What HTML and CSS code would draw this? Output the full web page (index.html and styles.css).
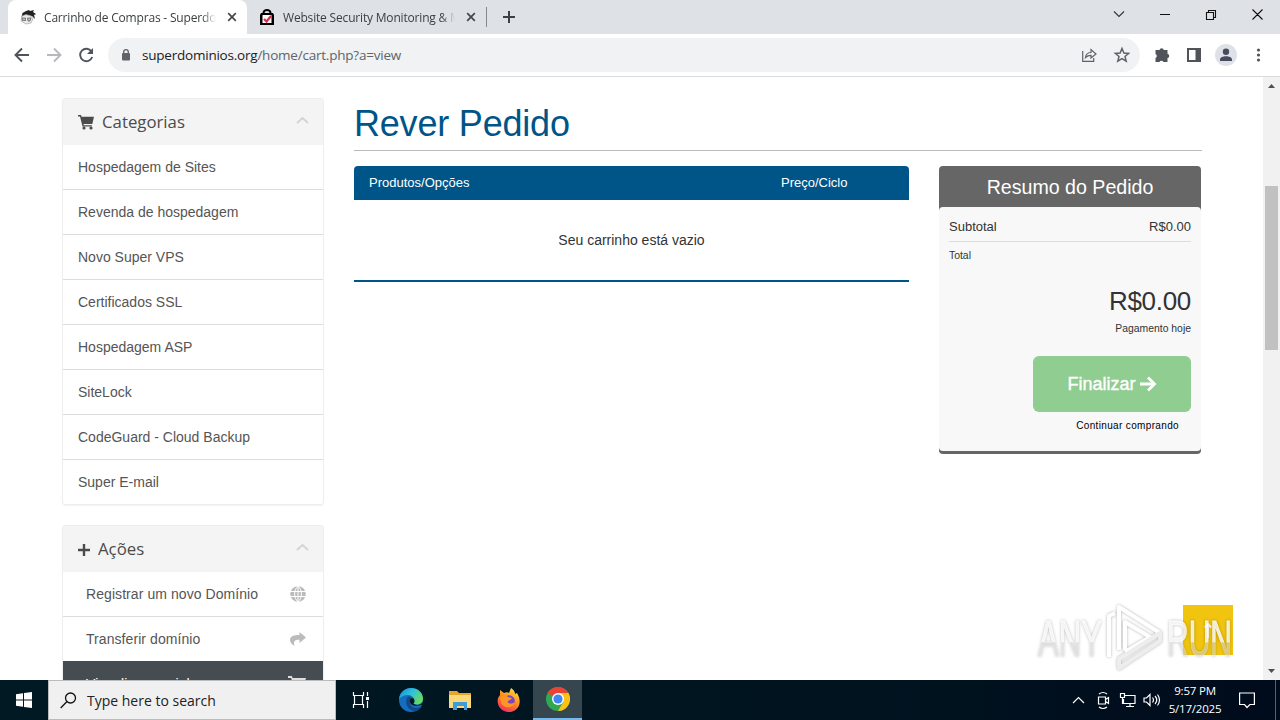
FILE: index.html
```html
<!DOCTYPE html>
<html lang="pt-BR">
<head>
    <meta charset="UTF-8">
    <meta name="viewport" content="width=device-width, initial-scale=1.0">
    <title>Carrinho de Compras - Superdominios</title>
    <link rel="stylesheet" href="styles.css">
</head>
<body>
    <div class="tabs">
        <div class="tab active">
            <svg class="favicon" width="16" height="16" viewBox="0 0 16 16"><path d="M1.500 8l1-4L6 2l3-1 1 1 4-1-1 2 3 2-2 1 1 4-3-3-6-1z" fill="#222"/><path d="M2 7l4-1.500 5 1.500 2 3-2 4-5 1-5-3z" fill="#eee9e6" stroke="#999" stroke-width=".6"/><path d="M2 9h3.500v2.500H2.500zM7.500 9H11l-1 3H8z" fill="#b5c4d2" stroke="#555" stroke-width=".7"/></svg>
            <span class="tab-title">Carrinho de Compras - Superdominios</span>
            <svg class="close" width="10" height="10" viewBox="0 0 10 10"><path d="M1.200 1.200l7.600 7.600M8.800 1.200L1.200 8.800"/></svg>
        </div>
        <div class="tab">
            <svg class="favicon" width="16" height="16" viewBox="0 0 16 16"><path d="M4.500 5V4a3.500 3 0 017 0v1" fill="none" stroke="#000" stroke-width="2"/><path d="M2 4h12l1 2v10H1V6z"/><path d="M3.500 6h9v8h-9z" fill="#fff"/><path d="M5 10l2.500 2.500L12 7" fill="none" stroke="#d9304c" stroke-width="2.200"/></svg>
            <span class="tab-title">Website Security Monitoring &amp; Malware</span>
            <svg class="close" width="10" height="10" viewBox="0 0 10 10"><path d="M1.200 1.200l7.600 7.600M8.800 1.200L1.200 8.800"/></svg>
        </div>
        <div class="tab-line"></div>
        <svg class="new-tab" width="14" height="14" viewBox="0 0 14 14"><path d="M7 1v12M1 7h12" stroke="#3c4043" stroke-width="2"/></svg>
        <svg class="window-buttons" width="160" height="28" viewBox="0 0 160 28" fill="none" stroke="#111" stroke-width="1.100"><path d="M5 8.500l5 5 5-5" stroke="#333"/><path d="M51 11.500h10M97.500 9.500h7v7h-7zM99.500 9.500v-2h7v7h-2M143.500 6.500l10 10M153.500 6.500l-10 10"/></svg>
    </div>
    <div class="toolbar">
        <svg class="nav-icons" width="96" height="24" viewBox="0 0 96 24" fill="none" stroke="#50545a" stroke-width="1.900"><path d="M29 12H16M22 5.500L15.500 12l6.500 6.500"/><path d="M47 12h13M54 5.500l6.500 6.500-6.500 6.500" stroke="#b6b8bb"/><path d="M91.500 8.500A6.200 6.200 0 1092.200 14"/><path d="M93 5v6h-6z" fill="#50545a" stroke="none"/></svg>
        <div class="address">
            <svg width="8" height="12" viewBox="0 0 8 12"><path d="M1.700 6V3a2.300 2.300 0 014.600 0v3" fill="none" stroke="#5f6368" stroke-width="1.300"/><rect y="4" width="8" height="7.500" rx="1" fill="#5f6368"/></svg>
            <span class="url">superdominios.org<span>/home/cart.php?a=view</span></span>
            <svg class="address-icons" width="50" height="18" viewBox="0 0 50 18" fill="none" stroke="#5f6368" stroke-width="1.200"><path d="M2.700 5v10.300h11V12"/><path d="M5.500 11.500c.5-3.500 2.500-5 5.500-5V3.500L16 8l-5 4V9.300c-2.500 0-4 .7-5.500 2.200z"/><path d="M42 2.500l1.900 4.500 4.800.4-3.700 3.100 1.200 4.700-4.200-2.500-4.200 2.500 1.200-4.700-3.700-3.100 4.800-.4z" stroke-width="1.500"/></svg>
        </div>
        <svg class="browser-icons" width="124" height="24" viewBox="0 0 124 24" fill="#50545a"><path d="M6 7h3.500a2.200 2.200 0 014.300 0h3.700v3.800a2.200 2.200 0 010 4.300V19h-4a2.200 2.200 0 00-4 0h-4v-4a2.200 2.200 0 000-4V7z"/><path d="M37 5h14v14H37zM39 7v10h6.500V7z" fill-rule="evenodd"/><circle cx="76" cy="12" r="11" fill="#dfe1e9"/><circle cx="76" cy="8.800" r="3.200" fill="#464b60"/><path d="M70 18v-1.500c0-4.500 12-4.500 12 0V18z" fill="#464b60"/><circle cx="108.500" cy="7" r="1.600"/><circle cx="108.500" cy="12" r="1.600"/><circle cx="108.500" cy="17" r="1.600"/></svg>
    </div>

    <div class="viewport">
        <div class="page">
            <div class="sidebar">
                <div class="panel">
                    <div class="panel-heading">
                        <svg width="16" height="15" viewBox="0 0 16 15"><path d="M0 0h3l.5 1.800H16L14.300 9H5.500l.3 1.200h8v1.300H4.500L2 1.500H0z" fill="#4b4b4b"/><circle cx="6" cy="13" r="1.600" fill="#4b4b4b"/><circle cx="13" cy="13" r="1.600" fill="#4b4b4b"/></svg>
                        <span>Categorias</span>
                        <svg class="chevron" width="13" height="8" viewBox="0 0 13 8"><path d="M1 7l5.500-5L12 7"/></svg>
                    </div>
                    <div class="item">Hospedagem de Sites</div>
                    <div class="item">Revenda de hospedagem</div>
                    <div class="item">Novo Super VPS</div>
                    <div class="item">Certificados SSL</div>
                    <div class="item">Hospedagem ASP</div>
                    <div class="item">SiteLock</div>
                    <div class="item">CodeGuard - Cloud Backup</div>
                    <div class="item">Super E-mail</div>
                </div>
                <div class="panel">
                    <div class="panel-heading">
                        <svg width="12" height="14" viewBox="0 0 12 14"><path d="M6 2v12M0 8h12" stroke="#4b4b4b" stroke-width="2.400"/></svg>
                        <span>Ações</span>
                        <svg class="chevron" width="13" height="8" viewBox="0 0 13 8"><path d="M1 7l5.500-5L12 7"/></svg>
                    </div>
                    <div class="item action">Registrar um novo Domínio
                        <svg width="16" height="16" viewBox="0 0 16 16"><circle cx="8" cy="8" r="7.800" fill="#bbb"/><path d="M0 5.500h16M0 10.500h16M8 0v16M8 0C3.500 4 3.500 12 8 16M8 0c4.500 4 4.500 12 0 16" stroke="#fff" fill="none"/></svg>
                    </div>
                    <div class="item action">Transferir domínio
                        <svg width="16" height="16" viewBox="0 0 16 16"><path d="M9.500 1L16 6.500 9.500 12V8.800C5 8.700 3 10 4.500 15 1.500 13 0 11 0 9c0-4 4-5 9.500-5z" fill="#bbb"/></svg>
                    </div>
                    <div class="item action selected">Visualizar carrinho
                        <svg width="18" height="16" viewBox="0 0 18 16"><path d="M0 0h4l.5 2H18l-2 7H6L3 2H0z" fill="#ddd"/></svg>
                    </div>
                </div>
            </div>
            <div class="main">
                <h1>Rever Pedido</h1>
                <div class="columns">
                    <div class="cart">
                        <div class="cart-header"><span>Produtos/Opções</span><span>Preço/Ciclo</span></div>
                        <div class="cart-empty">Seu carrinho está vazio</div>
                    </div>
                    <div class="summary">
                        <h2>Resumo do Pedido</h2>
                        <div class="summary-body">
                            <div class="subtotal"><span>Subtotal</span><span>R$0.00</span></div>
                            <div class="total">Total</div>
                            <div class="amount">R$0.00</div>
                            <div class="today">Pagamento hoje</div>
                            <div class="checkout">Finalizar <svg width="17" height="16" viewBox="0 0 17 16"><path d="M0 8h14M8 1.500L14.500 8 8 14.500" fill="none" stroke="#fff" stroke-width="2.800"/></svg></div>
                            <div class="continue">Continuar comprando</div>
                        </div>
                    </div>
                </div>
            </div>
        </div>
        <div class="scrollbar">
            <svg width="7" height="4" viewBox="0 0 7 4"><path d="M0 4l3.500-4L7 4z"/></svg>
            <div class="thumb"></div>
            <svg width="7" height="4" viewBox="0 0 7 4"><path d="M0 0h7L3.500 4z"/></svg>
        </div>
        <div class="to-top"><svg width="8" height="16" viewBox="0 0 8 16"><path d="M4 16V3M.8 5.500L4 2l3.200 3.500" fill="none" stroke="#fff" stroke-width="2"/></svg></div>
        <svg class="watermark" width="204" height="74" viewBox="0 0 204 74">
            <defs>
                <linearGradient id="fade" x1="0" y1="0" x2="0" y2="1"><stop offset=".55" stop-color="#fff" stop-opacity=".8"/><stop offset=".57" stop-color="#e6e6e6" stop-opacity=".5"/></linearGradient>
            </defs>
            <g fill="url(#fade)" stroke="url(#fade)" stroke-width="1">
                <text x="3" y="55" textLength="64" lengthAdjust="spacingAndGlyphs">ANY</text>
                <text x="132" y="55" textLength="65" lengthAdjust="spacingAndGlyphs">RUN</text>
            </g>
            <g fill="none" stroke="#fff" stroke-width="4" stroke-linejoin="round">
                <path d="M74 56V15l6-3M84 49V6l41 26-41 26M90 49V21l25 15-25 15"/>
                <path d="M84 67l41-27v-8L84 58z" stroke="#ededed"/>
            </g>
        </svg>
    </div>

    <div class="taskbar">
        <div class="start"><svg width="16" height="16" viewBox="0 0 16 16"><path d="M0 2.200L7 1.200V7.500H0zM8 1l8-1v7.500H8zM0 8.500h7v6.300l-7-1zM8 8.500h8V16l-8-1z" fill="#fff"/></svg></div>
        <div class="search"><svg width="17" height="17" viewBox="0 0 17 17"><circle cx="10.500" cy="6" r="5" fill="none" stroke="#111" stroke-width="1.300"/><path d="M7 9.500L.7 16" stroke="#111" stroke-width="1.300"/></svg>Type here to search</div>
        <div class="app"><svg width="20" height="16" viewBox="0 0 20 16" fill="none" stroke="#fff" stroke-width="1.200"><path d="M1.500 0v3.500h10V0M1.500 16v-3.500h10V16M2.500 3.500v9M10.500 3.500v9M15.500 0v4M15.500 9v7"/><path d="M14 5h3v3h-3z" fill="#fff" stroke="none"/></svg></div>
        <div class="app">
            <svg width="24" height="24" viewBox="0 0 24 24"><defs><linearGradient id="edge" x1="0" y1="0" x2="1" y2=".5"><stop stop-color="#168bd4"/><stop offset=".55" stop-color="#2fc2dc"/><stop offset="1" stop-color="#66da62"/></linearGradient></defs><circle cx="12" cy="12" r="12" fill="#146dbd"/><path d="M0 11C1 4 6 0 12 0c7 0 12 5 12 10.500 0 4-3 6-6.500 6-3 0-4.500-1-3-3C16 10 13 7 9 7c-4 0-7 2-9 4z" fill="url(#edge)"/><path d="M8 10c-3 6 2 13 8 13 3 0 5-2 7-5-4 3-12 3-12-4 0-2 1-3 2-4-2-2-4-2-5 0z" fill="#114a8b"/><path d="M11 12c-1 5 5 7 11 5l2 .5V14c-2 3-7 4-9.500 1.500 2-2 1-4-.5-5.500-2 0-3 1-3 2z" fill="#061a25"/></svg>
        </div>
        <div class="app"><svg width="22" height="19" viewBox="0 0 22 19"><path d="M0 0h8l2 2h12v15H0z" fill="#e7a52b"/><path d="M0 4h22v13H0z" fill="#fbd978"/><path d="M4 11h14v8h-3v-4H8v4H4z" fill="#3f9cdb"/></svg></div>
        <div class="app">
            <svg width="24" height="24" viewBox="0 0 24 24"><defs><linearGradient id="fox" x1=".8" y1="0" x2=".3" y2="1"><stop stop-color="#ffe33c"/><stop offset=".5" stop-color="#ff8a22"/><stop offset="1" stop-color="#f52b60"/></linearGradient></defs><path d="M3 7V2l4 3c2-1 4-1 5 0l2-5c3 2 4 4 4 6l2-1c5 8 3 17-6 19C5 25-1 18 1 10z" fill="url(#fox)"/><circle cx="12" cy="13" r="5.800" fill="#7745c7"/><path d="M3 10c2-3 6-3 8-1l4 1c-1 2-3 2-4 3-1 2 3 4 7 1-2 8-13 6-14 0z" fill="#ff9523"/></svg>
        </div>
        <div class="app current">
            <svg width="24" height="24" viewBox="0 0 24 24"><circle cx="12" cy="12" r="12" fill="#30a852"/><path d="M12 12L1.600 6A12 12 0 0122.400 6z" fill="#e94335"/><path d="M12 6h10.400A12 12 0 0112 24l5.200-9z" fill="#fbc116"/><circle cx="12" cy="12" r="6" fill="#fff"/><circle cx="12" cy="12" r="4.600" fill="#4285f4"/></svg>
        </div>
        <svg class="tray" width="90" height="20" viewBox="0 0 90 20" fill="none" stroke="#fff" stroke-width="1.200"><path d="M1 13l5.500-5.500L12 13"/><path d="M26.500 7h7v7h-7zM33.500 9.500l3-2v6l-3-2M27 4q4-3 8 0M27 17q4 3 8 0"/><path d="M53 5.500h10v8H51.500V9M58 13.500v3M54 16.500h8M48.500 3.500h4v4h-4zM50.500 7.500v6h2"/><path d="M72 8h2.500L78 4.500v11L74.500 12H72zM80.500 7.500q2 2.500 0 5M83 6q3.500 4 0 8M85.500 4.500q4 5.500 0 11"/></svg>
        <div class="clock"><div>9:57 PM</div><div>5/17/2025</div></div>
        <svg class="notice" width="16" height="17" viewBox="0 0 16 17"><path d="M.6 1h14.800v11.500h-4.500L8 15.500l-2.500-3H.6z" fill="none" stroke="#fff" stroke-width="1.200"/></svg>
        <div class="show-desktop"></div>
    </div>
</body>
</html>
```
FILE: styles.css
```css
* {
    box-sizing: border-box;
}
body {
    width: 1280px;
    height: 720px;
    margin: 0;
    overflow: hidden;
    display: flex;
    flex-direction: column;
    background-color: #fff;
    font-family: "Liberation Sans", Arial, sans-serif;
    font-size: 14px;
    color: #333;
}
svg {
    flex: none;
}
.tabs {
    height: 34px;
    flex: none;
    display: flex;
    align-items: center;
    background-color: #dee1e6;
    padding-left: 8px;
    font-family: "Open Sans", sans-serif;
    font-size: 12px;
    color: #3c4043;
}
.tab {
    width: 239px;
    height: 34px;
    display: flex;
    align-items: center;
    padding: 0 10px 0 12px;
}
.tab.active {
    background-color: #fff;
    border-radius: 8px 8px 0 0;
}
.tab-title {
    width: 172px;
    margin-left: 8px;
    overflow: hidden;
    white-space: nowrap;
    letter-spacing: -0.18px;
    -webkit-mask-image: linear-gradient(to right, #000 92%, transparent);
}
.close {
    margin-left: auto;
    fill: none;
    stroke: #44474b;
    stroke-width: 1.7;
}
.tab-line {
    width: 1px;
    height: 20px;
    background-color: #85888d;
}
.new-tab {
    margin-left: 15px;
}
.window-buttons {
    margin-left: auto;
    margin-right: 11px;
}
.toolbar {
    height: 43px;
    flex: none;
    display: flex;
    align-items: center;
    border-bottom: 1px solid #d9dbdd;
}
.address {
    width: 1032px;
    height: 34px;
    margin-left: 12px;
    padding: 0 10px 0 14px;
    display: flex;
    align-items: center;
    background-color: #f0f2f4;
    border-radius: 17px;
}
.url {
    margin-left: 12px;
    font-family: "Open Sans", sans-serif;
    font-size: 13.5px;
    letter-spacing: -0.22px;
    color: #202124;
}
.url span {
    color: #60646a;
}
.address-icons {
    margin-left: auto;
}
.browser-icons {
    margin-left: 10px;
}
.viewport {
    height: 603px;
    flex: none;
    display: flex;
    position: relative;
    overflow: hidden;
}
.page {
    width: 1263px;
    display: flex;
    padding: 21px 61px 0 62px;
    gap: 30px;
}
.sidebar {
    width: 262px;
    flex: none;
}
.panel {
    border: 1px solid #eee;
    border-radius: 3px;
    margin-bottom: 20px;
    box-shadow: 0 1px 1px rgba(0, 0, 0, 0.05);
}
.panel-heading {
    height: 46px;
    display: flex;
    align-items: center;
    gap: 8px;
    padding: 0 14px 0 15px;
    background-color: #f4f4f4;
    font-family: "Open Sans", sans-serif;
    font-size: 16.8px;
    color: #4b4b4b;
}
.panel-heading span {
    padding-bottom: 2px;
}
.chevron {
    margin: -4px 0 0 auto;
    fill: none;
    stroke: #d3d3d3;
    stroke-width: 1.8;
}
.item {
    height: 45px;
    padding: 0 15px;
    line-height: 44px;
    border-bottom: 1px solid #ddd;
    color: #555;
}
.item:last-child {
    height: 44px;
    border-bottom: 0;
}
.action {
    display: flex;
    align-items: center;
    justify-content: space-between;
    padding: 0 17px 0 23px;
    letter-spacing: 0.07px;
}
.item.selected {
    height: 46px;
    margin-top: -1px;
    background-color: #454d52;
    color: #fff;
}
.main {
    flex: 1;
}
h1 {
    height: 53px;
    margin: 0 0 15px;
    border-bottom: 1px solid #bbb;
    font-size: 36px;
    font-weight: normal;
    letter-spacing: -0.2px;
    line-height: 52px;
    color: #058;
}
.columns {
    display: flex;
    align-items: flex-start;
    gap: 30px;
}
.cart {
    width: 555px;
    border-bottom: 2px solid #058;
}
.cart-header {
    height: 34px;
    display: grid;
    grid-template-columns: 412px 1fr;
    padding-left: 15px;
    background-color: #058;
    border-radius: 4px 4px 0 0;
    font-size: 13px;
    line-height: 33px;
    color: #fff;
}
.cart-empty {
    height: 80px;
    line-height: 80px;
    text-align: center;
}
.summary {
    width: 262px;
    border-bottom: 3px solid #666;
    border-radius: 4px;
    background-color: #666;
}
h2 {
    margin: 0;
    height: 41px;
    font-size: 19.6px;
    font-weight: normal;
    line-height: 42px;
    text-align: center;
    color: #fff;
}
.summary-body {
    height: 244px;
    padding: 4px 10px 0;
    background-color: #f8f8f8;
    border-radius: 4px;
    font-size: 10.4px;
    text-align: right;
}
.subtotal {
    height: 31px;
    display: flex;
    justify-content: space-between;
    border-bottom: 1px solid #ddd;
    font-size: 13px;
    line-height: 31px;
}
.total {
    text-align: left;
    line-height: 27px;
}
.amount {
    margin-top: 16px;
    font-size: 26px;
    letter-spacing: -0.3px;
    line-height: 32px;
}
.today {
    line-height: 23px;
}
.checkout {
    width: 158px;
    height: 56px;
    margin: 16px 0 0 auto;
    display: flex;
    align-items: center;
    justify-content: center;
    gap: 4px;
    border-radius: 6px;
    background-color: #90cd90;
    color: #fff;
    font-size: 18px;
    -webkit-text-stroke: 0.4px #fff;
}
.continue {
    padding-right: 12px;
    font-size: 10px;
    line-height: 28px;
    letter-spacing: 0.35px;
    color: #000;
}
.scrollbar {
    width: 17px;
    display: flex;
    flex-direction: column;
    align-items: center;
    padding: 7px 0;
    background-color: #f1f1f1;
    fill: #505050;
}
.thumb {
    width: 13px;
    height: 164px;
    margin: 98px 0 auto;
    background-color: #c1c1c1;
}
.to-top {
    position: absolute;
    right: 47px;
    bottom: 25px;
    width: 50px;
    height: 50px;
    display: flex;
    align-items: center;
    justify-content: center;
    background-color: #f1c40f;
}
.watermark {
    position: absolute;
    right: 41px;
    bottom: 5px;
    filter: drop-shadow(0 0 1.5px rgba(0, 0, 0, 0.3));
    font-family: "Liberation Sans", Arial, sans-serif;
    font-size: 50px;
}
.taskbar {
    height: 40px;
    flex: none;
    display: flex;
    align-items: center;
    background: linear-gradient(to right, #001923, #00131f 70%, #000b1c);
    color: #fff;
}
.start {
    width: 48px;
    display: flex;
    justify-content: center;
}
.search {
    width: 288px;
    height: 40px;
    display: flex;
    align-items: center;
    gap: 10px;
    margin-right: 1px;
    padding-left: 11px;
    border: 1px solid #bbb;
    background-color: #f0f0f0;
    color: #222;
    font-family: "Open Sans", sans-serif;
    font-size: 14px;
}
.app {
    width: 49px;
    height: 40px;
    display: flex;
    align-items: center;
    justify-content: center;
}
.current {
    background-color: #35464f;
    border-bottom: 2px solid #76b9ed;
}
.tray {
    margin-left: auto;
}
.clock {
    width: 56px;
    margin-left: 5px;
    font-family: "Open Sans", sans-serif;
    font-size: 11.5px;
    line-height: 18px;
    letter-spacing: -0.2px;
    text-align: center;
    white-space: nowrap;
}
.notice {
    margin-left: 16px;
}
.show-desktop {
    width: 5px;
    height: 40px;
    margin-left: 20px;
    border-left: 1px solid #58616a;
}
```
